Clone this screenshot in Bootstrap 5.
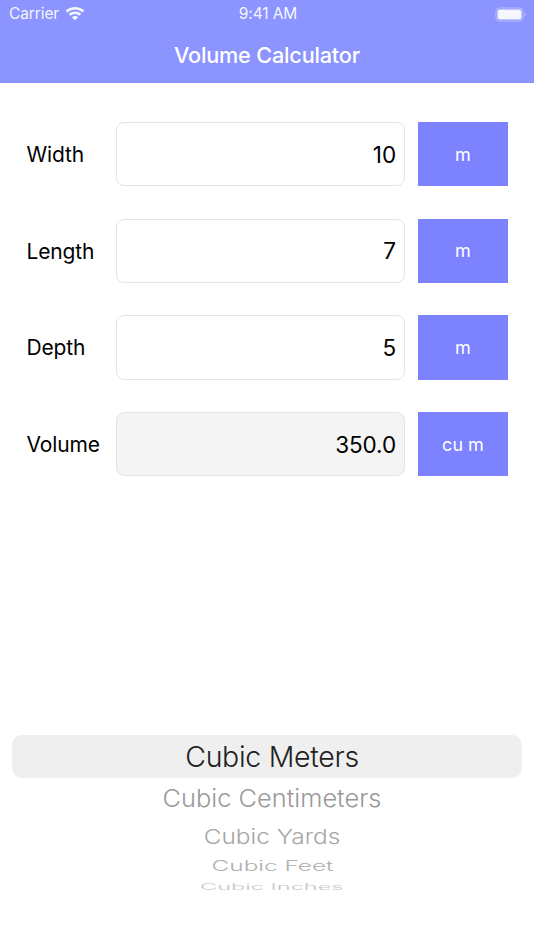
<!DOCTYPE html>
<html lang="en">
<head>
<meta charset="utf-8">
<title>Volume Calculator</title>
<link href="https://cdn.jsdelivr.net/npm/bootstrap@5.3.0/dist/css/bootstrap.min.css" rel="stylesheet">
<style>
html,body{height:950px;overflow:hidden;background:#fff}
body{font-family:Inter,"Liberation Sans",sans-serif;color:#000}
.app-head{background:#8b94ff;height:83px;color:#fff}
.stat-bar{height:28px;padding:0 7px 0 9px;font-size:15.500px;line-height:28px;letter-spacing:-.1px;opacity:.92}
.stat-side{width:120px}
.stat-gap{gap:6px}
.wifi-mark{margin-top:-2px}
.head-title{font-size:21.700px;font-weight:500;line-height:26px;margin-top:14px;letter-spacing:-.2px}
.form-area{padding:39px 26px 0 27px;gap:32.300px}
.calc-row{height:64.400px}
.calc-label{width:89px;font-size:21px;letter-spacing:-.15px;margin-left:-.5px;margin-right:.5px;padding-top:1px}
.calc-input.form-control{flex:1 1 0;min-width:0;height:100%;width:289px;border-radius:8px;border-color:#e4e4e4;font-size:22.500px;text-align:right;padding:0 8px;color:#000;letter-spacing:-.1px}
.calc-input.form-control[readonly]{background:#f4f4f4}
.unit-btn.btn{width:90px;height:100%;margin-left:13px;background:#7d82ff;border:0;border-radius:0;color:#fff;font-size:18px;padding:0}
.wheel{position:absolute;left:12px;top:735px;width:510px}
.wheel-item{white-space:nowrap;font-weight:300;margin-left:10px}
.wheel-pill{height:43px;border-radius:10px;background:#efefef;font-size:28.500px;line-height:44px;color:#222;letter-spacing:-.3px;text-align:center;padding-left:10px;font-weight:300}
.w1{font-size:25.400px;line-height:30px;margin-top:5px;color:#9a9a9a;transform:scaleY(.95)}
.w2{font-size:24.400px;line-height:26px;margin-top:10px;color:#a6a6a6;transform:scaleY(.84)}
.w3{font-size:21px;line-height:20px;margin-top:7px;color:#b0b0b0;transform:scale(1.16,.68)}
.w4{font-size:18px;line-height:14px;margin-top:4px;color:#c6c6c6;transform:scale(1.31,.5)}
</style>
</head>
<body class="position-relative">
<header class="app-head">
  <div class="stat-bar d-flex justify-content-between align-items-center">
    <div class="stat-side stat-gap d-flex align-items-center">
      <span>Carrier</span>
      <svg class="wifi-mark" width="20" height="15" viewBox="0 0 20 15"><path d="M1.500 5.500C6.300 1.100 13.700 1.100 18.500 5.500" fill="none" stroke="#fff" stroke-width="2.600"/><path d="M4.700 8.800C7.700 6 12.300 6 15.300 8.800" fill="none" stroke="#fff" stroke-width="2.600"/><path d="M6.900 11.200C8.700 9.500 11.300 9.500 13.100 11.200L10 14.300z" fill="#fff"/></svg>
    </div>
    <span>9:41 AM</span>
    <div class="stat-side d-flex justify-content-end">
      <svg width="32" height="15" viewBox="0 0 32 15"><rect x="1" y="1" width="27" height="13" rx="3.600" fill="none" stroke="#fff" stroke-opacity=".45"/><rect x="2.500" y="2.500" width="24" height="10" rx="2.300" fill="#fff"/><path d="M29.500 5.500c.8.300 1.200 1.100 1.200 2s-.4 1.700-1.200 2z" fill="#fff" fill-opacity=".5"/></svg>
    </div>
  </div>
  <div class="head-title text-center">Volume Calculator</div>
</header>
<main class="form-area d-flex flex-column">
  <div class="calc-row d-flex align-items-center">
    <label class="calc-label">Width</label>
    <input class="calc-input form-control" type="text" value="10">
    <button class="unit-btn btn" type="button">m</button>
  </div>
  <div class="calc-row d-flex align-items-center">
    <label class="calc-label">Length</label>
    <input class="calc-input form-control" type="text" value="7">
    <button class="unit-btn btn" type="button">m</button>
  </div>
  <div class="calc-row d-flex align-items-center">
    <label class="calc-label">Depth</label>
    <input class="calc-input form-control" type="text" value="5">
    <button class="unit-btn btn" type="button">m</button>
  </div>
  <div class="calc-row d-flex align-items-center">
    <label class="calc-label">Volume</label>
    <input class="calc-input form-control" type="text" value="350.0" readonly>
    <button class="unit-btn btn" type="button">cu m</button>
  </div>
</main>
<section class="wheel d-flex flex-column align-items-center">
  <div class="wheel-pill align-self-stretch">Cubic Meters</div>
  <div class="wheel-item w1">Cubic Centimeters</div>
  <div class="wheel-item w2">Cubic Yards</div>
  <div class="wheel-item w3">Cubic Feet</div>
  <div class="wheel-item w4">Cubic Inches</div>
</section>
<script src="https://cdn.jsdelivr.net/npm/bootstrap@5.3.0/dist/js/bootstrap.bundle.min.js"></script>
</body>
</html>
